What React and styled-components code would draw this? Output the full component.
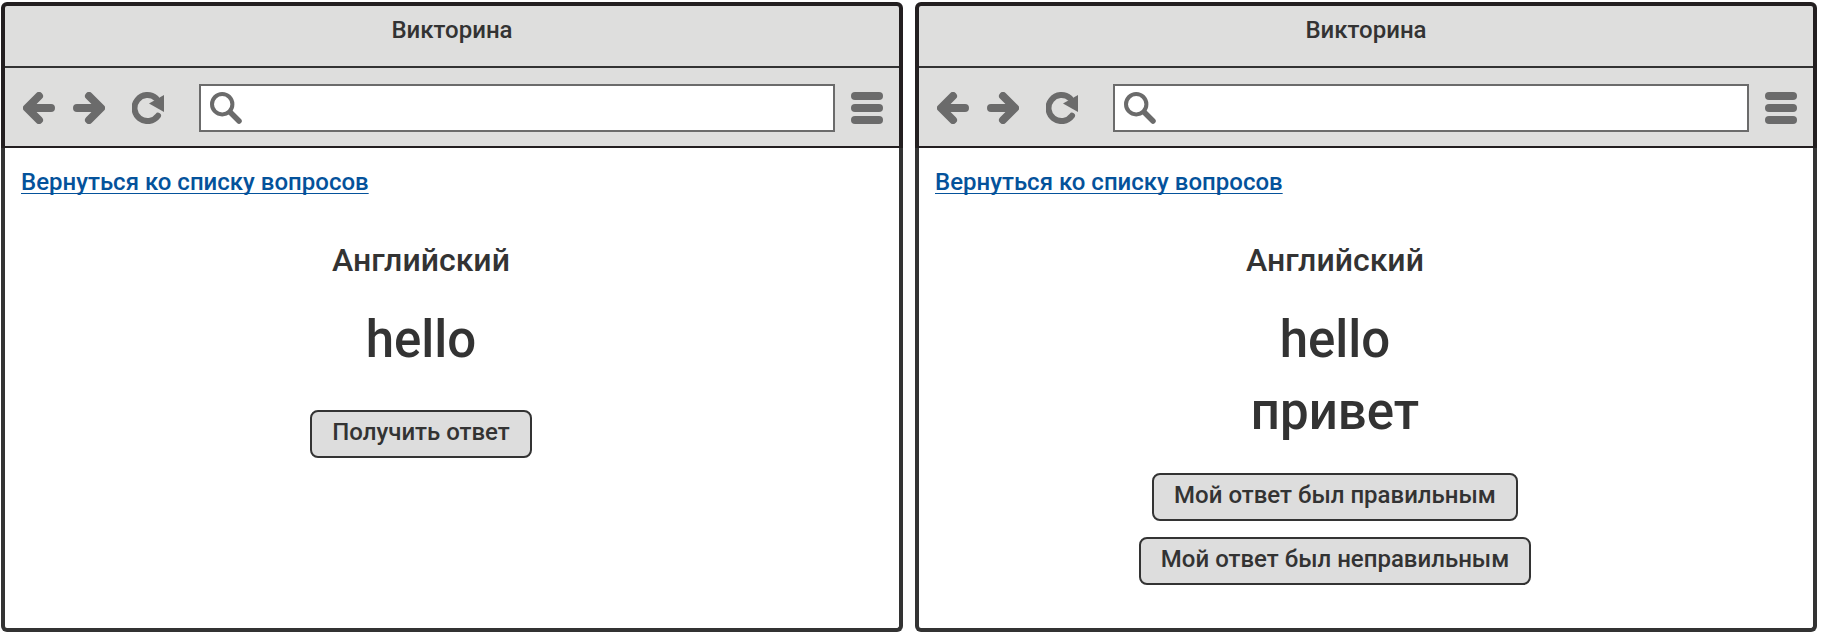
import React from "react";
import styled, { createGlobalStyle } from "styled-components";

const ink = "#333333";
const frame = "#231f20";
const chromeBg = "#dededd";
const iconColor = "#6b6b6b";

const GlobalStyle = createGlobalStyle`
  *, *::before, *::after { box-sizing: border-box; }
  body {
    margin: 0;
    background: #ffffff;
    color: ${ink};
    font: 500 24px/28px Roboto, "Liberation Sans", sans-serif;
  }
`;

const Page = styled.main`
  display: grid;
  grid-template-columns: 1fr 1fr;
  gap: 12px;
  min-height: 100vh;
  padding: 2px 7px 4px 1px;
`;

const Window = styled.section`
  display: flex;
  flex-direction: column;
  min-width: 0;
`;

const Chrome = styled.header`
  background: ${chromeBg};
  border: 4px solid ${frame};
  border-bottom-width: 2px;
  border-radius: 6px 6px 0 0;
`;

const TitleBar = styled.h1`
  margin: 0;
  padding: 10px 16px 22px;
  border-bottom: 2px solid ${ink};
  font: inherit;
  text-align: center;
`;

const Toolbar = styled.div`
  display: flex;
  align-items: center;
  padding: 16px 16px 14px 18px;
`;

const NavGroup = styled.nav`
  display: flex;
  gap: 18px;
  margin-right: 27px;
`;

const IconButton = styled.button`
  display: block;
  flex: none;
  width: 32px;
  height: 32px;
  padding: 0;
  border: 0;
  background: none;
  color: ${iconColor};
  cursor: pointer;
`;

const Icon = styled.svg`
  display: block;
  flex: none;
  width: 32px;
  height: 32px;
  color: ${iconColor};
`;

const SearchField = styled.label`
  display: flex;
  flex: 1;
  align-items: center;
  gap: 8px;
  min-width: 0;
  height: 48px;
  margin: 0 16px 0 35px;
  padding: 0 9px;
  border: 2px solid ${iconColor};
  background: #ffffff;
`;

const SearchInput = styled.input`
  flex: 1;
  min-width: 0;
  padding: 0;
  border: 0;
  outline: 0;
  background: transparent;
  color: inherit;
  font: inherit;
`;

const Content = styled.div`
  flex: 1;
  padding: 20px 16px 40px;
  border: 4px solid ${ink};
  border-top: 0;
  border-radius: 0 0 6px 6px;
  background: #ffffff;
`;

const BackLink = styled.a`
  color: #04529b;
  text-decoration: underline;
  text-decoration-thickness: 1px;
  text-underline-offset: 3px;
  text-decoration-skip-ink: none;
`;

const Card = styled.article`
  display: flex;
  flex-direction: column;
  align-items: center;
  margin-top: 44px;
  padding-right: 62px;
`;

const Topic = styled.h2`
  margin: 0 0 24px;
  font-size: 32px;
  font-weight: 500;
  line-height: 40px;
`;

const Word = styled.p`
  margin: 0;
  font-size: 51px;
  line-height: 72px;
`;

const Actions = styled.div`
  display: flex;
  flex-direction: column;
  align-items: center;
  gap: 16px;
  margin-top: ${({ $compact }) => ($compact ? "25px" : "34px")};
`;

const Button = styled.button`
  padding: 6px 20px 10px;
  border: 2px solid ${ink};
  border-radius: 8px;
  background: #dddddd;
  color: inherit;
  font: inherit;
  cursor: pointer;
`;

const BackIcon = () => (
  <Icon viewBox="0 0 32 32" fill="none" stroke="currentColor" strokeWidth="8" strokeLinecap="round" strokeLinejoin="round" aria-hidden="true">
    <path d="M16 4 L4 16 L16 28 M5 16 H28" />
  </Icon>
);

const ForwardIcon = () => (
  <Icon viewBox="0 0 32 32" fill="none" stroke="currentColor" strokeWidth="8" strokeLinecap="round" strokeLinejoin="round" aria-hidden="true">
    <path d="M16 4 L28 16 L16 28 M27 16 H4" />
  </Icon>
);

const ReloadIcon = () => (
  <Icon viewBox="0 0 32 32" aria-hidden="true">
    <path d="M24 6.2 A13 13 0 1 0 26 23.7" fill="none" stroke="currentColor" strokeWidth="6" strokeLinecap="round" />
    <path d="M32 3 V20 L17 11.5 Z" fill="currentColor" />
  </Icon>
);

const SearchIcon = () => (
  <Icon viewBox="0 0 32 32" fill="none" stroke="currentColor" aria-hidden="true">
    <circle cx="12.2" cy="12.2" r="10.2" strokeWidth="4" />
    <path d="M20.5 20.5 L29 29" strokeWidth="5.5" strokeLinecap="round" />
  </Icon>
);

const MenuIcon = () => (
  <Icon viewBox="0 0 32 32" fill="currentColor" aria-hidden="true">
    <rect width="32" height="8" rx="4" />
    <rect y="12" width="32" height="8" rx="4" />
    <rect y="24" width="32" height="8" rx="4" />
  </Icon>
);

function BrowserWindow({ title, children }) {
  return (
    <Window>
      <Chrome>
        <TitleBar>{title}</TitleBar>
        <Toolbar>
          <NavGroup>
            <IconButton type="button" aria-label="Назад"><BackIcon /></IconButton>
            <IconButton type="button" aria-label="Вперёд"><ForwardIcon /></IconButton>
          </NavGroup>
          <IconButton type="button" aria-label="Обновить"><ReloadIcon /></IconButton>
          <SearchField>
            <SearchIcon />
            <SearchInput type="text" aria-label="Адрес" />
          </SearchField>
          <IconButton type="button" aria-label="Меню"><MenuIcon /></IconButton>
        </Toolbar>
      </Chrome>
      <Content>{children}</Content>
    </Window>
  );
}

function Quiz({ topic, words, answers, compact }) {
  return (
    <BrowserWindow title="Викторина">
      <BackLink href="#questions">Вернуться ко списку вопросов</BackLink>
      <Card>
        <Topic>{topic}</Topic>
        {words.map((word) => <Word key={word}>{word}</Word>)}
        <Actions $compact={compact}>
          {answers.map((answer) => <Button key={answer} type="button">{answer}</Button>)}
        </Actions>
      </Card>
    </BrowserWindow>
  );
}

export default function App() {
  return (
    <>
      <GlobalStyle />
      <Page>
        <Quiz topic="Английский" words={["hello"]} answers={["Получить ответ"]} />
        <Quiz
          topic="Английский"
          words={["hello", "привет"]}
          answers={["Мой ответ был правильным", "Мой ответ был неправильным"]}
          compact
        />
      </Page>
    </>
  );
}
